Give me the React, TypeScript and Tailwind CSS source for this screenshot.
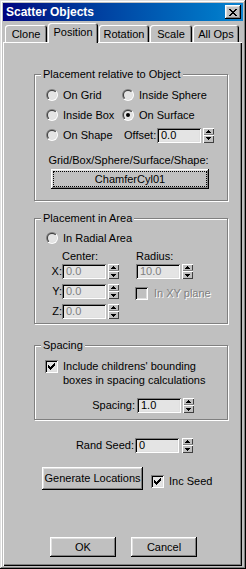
import React from 'react';
import { clsx, type ClassValue } from 'clsx';
import { twMerge } from 'tailwind-merge';

function cn(...inputs: ClassValue[]) {
  return twMerge(clsx(inputs));
}

const raised = 'shadow-[inset_-1px_-1px_#000,inset_1px_1px_#fff,inset_-2px_-2px_#808080,inset_2px_2px_#dfdfdf]';
const sunken = 'shadow-[inset_1px_1px_#808080,inset_-1px_-1px_#fff,inset_2px_2px_#000,inset_-2px_-2px_#dfdfdf]';
const disabledText = 'text-[#808080] [text-shadow:1px_1px_#fff]';

// pixel patterns for tiny glyphs
const Pixels = ({ rows, w, h }: { rows: string[]; w: number; h: number }) => (
  <svg width={w} height={h} shapeRendering="crispEdges">
    {rows.map((r, y) =>
      r.split('').map((c, x) => (c === 'X' ? <rect key={`${x}-${y}`} x={x} y={y} width={1} height={1} fill="#000" /> : null))
    )}
  </svg>
);

const CLOSE = ['XX....XX', '.XX..XX.', '..XXXX..', '...XX...', '..XXXX..', '.XX..XX.', 'XX....XX'];
const CHECK = ['......X', '.....XX', 'X...XXX', 'XX.XXX.', 'XXXXX..', '.XXX...', '..X....'];

const Radio = ({ checked = false, label }: { checked?: boolean; label: string }) => (
  <div className="flex items-center h-[20px] whitespace-nowrap">
    <svg width="12" height="12" className="shrink-0">
      <defs>
        <linearGradient id="ro" x1="0" y1="0" x2="1" y2="1">
          <stop offset="0.5" stopColor="#808080" />
          <stop offset="0.5" stopColor="#ffffff" />
        </linearGradient>
        <linearGradient id="ri" x1="0" y1="0" x2="1" y2="1">
          <stop offset="0.5" stopColor="#404040" />
          <stop offset="0.5" stopColor="#dfdfdf" />
        </linearGradient>
      </defs>
      <circle cx="6" cy="6" r="6" fill="url(#ro)" />
      <circle cx="6" cy="6" r="5" fill="url(#ri)" />
      <circle cx="6" cy="6" r="4" fill="#e4e4e4" />
      {checked && <circle cx="6" cy="6" r="2" fill="#000" />}
    </svg>
    <span className="ml-[5px]">{label}</span>
  </div>
);

const CheckBox = ({ checked = false, disabled = false }: { checked?: boolean; disabled?: boolean }) => (
  <div className={cn('w-[13px] h-[13px] shrink-0 flex items-center justify-center', sunken, disabled ? 'bg-[#c0c0c0]' : 'bg-[#e4e4e4]')}>
    {checked && <Pixels rows={CHECK} w={7} h={7} />}
  </div>
);

const Spinner = ({ className }: { className?: string }) => (
  <div className={cn('w-[11px] h-[15px] flex flex-col bg-[#c0c0c0] shadow-[inset_-1px_-1px_#404040]', className)}>
    <div className="h-[7px] flex items-center justify-center shadow-[inset_1px_1px_#fff,inset_0_-1px_#808080]">
      <Pixels rows={['..X..', '.XXX.', 'XXXXX']} w={5} h={3} />
    </div>
    <div className="h-[8px] flex items-center justify-center shadow-[inset_1px_1px_#fff]">
      <Pixels rows={['XXXXX', '.XXX.', '..X..']} w={5} h={3} />
    </div>
  </div>
);

const NumField = ({ value, disabled = false }: { value: string; disabled?: boolean }) => (
  <div className={cn('w-[44px] h-[15px] bg-[#e4e4e4] pl-[4px] leading-[15px]', sunken, disabled && 'text-[#808080]')}>
    {value}
  </div>
);

const Group = ({ title, className, children }: { title: string; className?: string; children?: React.ReactNode }) => (
  <div className={cn('relative ml-[31px] w-[194px] border border-[#808080] shadow-[inset_1px_1px_#fff,1px_1px_#fff]', className)}>
    <span className="absolute left-[6px] top-[-8px] px-[2px] bg-[#c0c0c0] leading-[14px] whitespace-nowrap">{title}</span>
    {children}
  </div>
);

const Button = ({ label, className, focused = false }: { label: string; className?: string; focused?: boolean }) => (
  <div className={cn('flex items-center justify-center bg-[#c0c0c0] p-[4px] whitespace-nowrap', raised, className)}>
    <div className={cn('w-full h-full flex items-center justify-center', focused && 'outline outline-1 outline-dotted outline-black')}>
      {label}
    </div>
  </div>
);

const tabs = [
  { name: 'Clone', w: 'w-[42px]' },
  { name: 'Position', w: 'w-[50px]', active: true },
  { name: 'Rotation', w: 'w-[50px]' },
  { name: 'Scale', w: 'w-[42px]' },
  { name: 'All Ops', w: 'w-[46px]' },
];

export default function App() {
  return (
    <div
      className={cn(
        'w-[246px] h-[569px] bg-[#c0c0c0] p-[3px] flex flex-col text-[11px] text-black overflow-hidden select-none',
        "font-['Liberation_Sans',Arial,sans-serif]",
        'shadow-[inset_-1px_-1px_#000,inset_1px_1px_#dfdfdf,inset_-2px_-2px_#808080,inset_2px_2px_#fff]'
      )}
    >
      {/* Title bar */}
      <div className="h-[18px] shrink-0 flex items-center pl-[3px] pr-[2px] bg-gradient-to-r from-[#000080] to-[#1084d0]">
        <span className="text-white font-bold text-[12px] leading-[18px]">Scatter Objects</span>
        <div className={cn('ml-auto w-[16px] h-[14px] bg-[#c0c0c0] flex items-center justify-center', raised)}>
          <Pixels rows={CLOSE} w={8} h={7} />
        </div>
      </div>

      {/* Tabs */}
      <div className="mt-[2px] h-[19px] shrink-0 flex items-end pl-[2px]">
        {tabs.map((t) => (
          <div
            key={t.name}
            className={cn(
              'flex items-center justify-center rounded-t-[3px] bg-[#c0c0c0] mr-[1px] pt-[1px]',
              'shadow-[inset_1px_1px_#fff,inset_-1px_0_#000,inset_-2px_0_#808080]',
              t.w,
              t.active ? 'h-[20px] -mb-px relative z-10 pb-[2px]' : 'h-[17px]'
            )}
          >
            {t.name}
          </div>
        ))}
      </div>

      {/* Panel */}
      <div className="flex-1 mr-px flex flex-col shadow-[inset_1px_1px_#fff,inset_-1px_-1px_#000,inset_-2px_-2px_#808080]">
        <Group title="Placement relative to Object" className="mt-[32px] h-[127px]">
          <div className="mt-[10px] ml-[11px] grid grid-cols-[76px_auto]">
            <Radio label="On Grid" />
            <Radio label="Inside Sphere" />
            <Radio label="Inside Box" />
            <Radio checked label="On Surface" />
            <Radio label="On Shape" />
            <div className="flex items-center h-[20px] ml-[2px]">
              <span className="w-[33px]">Offset:</span>
              <NumField value="0.0" />
              <Spinner className="ml-[2px]" />
            </div>
          </div>
          <div className="mt-[8px] h-[14px] leading-[14px] text-center pr-[5px]">Grid/Box/Sphere/Surface/Shape:</div>
          <Button label="ChamferCyl01" focused className="mt-[2px] ml-[16px] w-[158px] h-[20px] p-[3px]" />
        </Group>

        <Group title="Placement in Area" className="mt-[17px] h-[106px]">
          <div className="mt-[9px] ml-[11px]">
            <Radio label="In Radial Area" />
          </div>
          <div className="mt-[1px] h-[14px] leading-[14px] flex ml-[27px]">
            <span className="w-[74px]">Center:</span>
            <span>Radius:</span>
          </div>
          <div className="mt-[1px] flex flex-col gap-[5px] ml-[5px]">
            <div className="flex h-[15px] items-center">
              <span className="w-[22px] text-right">X:</span>
              <NumField value="0.0" disabled />
              <Spinner className="ml-[2px]" />
              <div className="ml-[17px] flex items-center">
                <NumField value="10.0" disabled />
                <Spinner className="ml-[2px]" />
              </div>
            </div>
            <div className="flex h-[15px] items-center">
              <span className="w-[22px] text-right">Y:</span>
              <NumField value="0.0" disabled />
              <Spinner className="ml-[2px]" />
              <div className="ml-[16px] flex items-center mt-[3px]">
                <CheckBox disabled />
                <span className={cn('ml-[6px]', disabledText)}>In XY plane</span>
              </div>
            </div>
            <div className="flex h-[15px] items-center">
              <span className="w-[22px] text-right">Z:</span>
              <NumField value="0.0" disabled />
              <Spinner className="ml-[2px]" />
            </div>
          </div>
        </Group>

        <Group title="Spacing" className="mt-[21px] h-[75px]">
          <div className="mt-[13px] ml-[10px] flex items-start">
            <div className="mt-[1px]">
              <CheckBox checked />
            </div>
            <span className="ml-[5px] leading-[14px] whitespace-nowrap">
              Include childrens' bounding
              <br />
              boxes in spacing calculations
            </span>
          </div>
          <div className="mt-[11px] flex items-center h-[15px]">
            <span className="w-[100px] text-right">Spacing:</span>
            <div className="ml-[2px]">
              <NumField value="1.0" />
            </div>
            <Spinner className="ml-[2px]" />
          </div>
        </Group>

        <div className="mt-[18px] flex items-center h-[15px] ml-[31px]">
          <span className="w-[100px] text-right">Rand Seed:</span>
          <div className="ml-px">
            <NumField value="0" />
          </div>
          <Spinner className="ml-[3px]" />
        </div>

        <div className="mt-[14px] flex items-center ml-[39px]">
          <Button label="Generate Locations" className="w-[101px] h-[23px] p-[2px]" />
          <div className="ml-[8px] mt-[6px]">
            <CheckBox checked />
          </div>
          <span className="ml-[5px] mt-[5px]">Inc Seed</span>
        </div>

        <div className="mt-[47px] flex ml-[47px]">
          <Button label="OK" className="w-[66px] h-[20px]" />
          <Button label="Cancel" className="ml-[15px] w-[66px] h-[20px]" />
        </div>
      </div>
    </div>
  );
}
